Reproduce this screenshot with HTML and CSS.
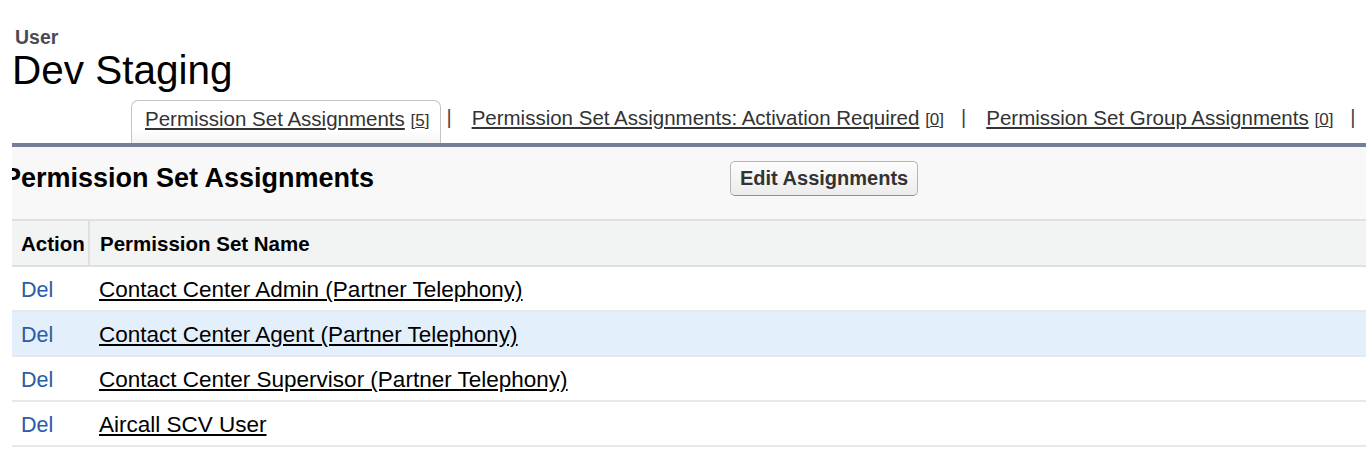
FILE: index.html
```html
<!DOCTYPE html>
<html>
<head>
<meta charset="utf-8">
<link rel="stylesheet" href="styles.css">
</head>
<body>
<div class="page">
  <div class="crumb">User</div>
  <h1 class="title">Dev Staging</h1>
  <div class="tabs">
    <span class="tab active"><a href="#">Permission Set Assignments</a> <span class="count">[<u>5</u>]</span></span>
    <span class="sep">|</span>
    <span class="tab"><a href="#">Permission Set Assignments: Activation Required</a> <span class="count">[<u>0</u>]</span></span>
    <span class="sep">|</span>
    <span class="tab"><a href="#">Permission Set Group Assignments</a> <span class="count">[<u>0</u>]</span></span>
    <span class="sep">|</span>
  </div>
  <div class="block">
    <div class="block-head">
      <h2 class="block-title">Permission Set Assignments</h2>
      <button class="btn">Edit Assignments</button>
    </div>
    <table class="list">
      <thead>
        <tr><th class="col-action">Action</th><th class="col-name">Permission Set Name</th></tr>
      </thead>
      <tbody>
        <tr><td class="col-action"><a class="del" href="#">Del</a></td><td class="col-name"><a href="#">Contact Center Admin (Partner Telephony)</a></td></tr>
        <tr class="hl"><td class="col-action"><a class="del" href="#">Del</a></td><td class="col-name"><a href="#">Contact Center Agent (Partner Telephony)</a></td></tr>
        <tr><td class="col-action"><a class="del" href="#">Del</a></td><td class="col-name"><a href="#">Contact Center Supervisor (Partner Telephony)</a></td></tr>
        <tr><td class="col-action"><a class="del" href="#">Del</a></td><td class="col-name"><a href="#">Aircall SCV User</a></td></tr>
      </tbody>
    </table>
  </div>
</div>
</body>
</html>
```
FILE: styles.css
```css
html, body { margin: 0; padding: 0; background: #fff; }
body { font-family: "Liberation Sans", Arial, sans-serif; color: #000; }
.page { padding: 26px 0 0 12px; }
.crumb { font-size: 19.5px; font-weight: bold; color: #4a4a56; line-height: 22px; padding-left: 3px; }
.title { margin: 0; font-size: 40.5px; font-weight: normal; line-height: 44px; color: #000; }
.tabs { display: flex; align-items: flex-start; margin-left: 119px; margin-top: 8px; height: 43px; }
.tab { display: block; padding: 0 12px; line-height: 36px; font-size: 20.5px; color: #333; white-space: nowrap; }
.tab a { color: #333; text-decoration: underline; }
.tab .count { font-size: 17px; color: #333; }
.tab.active { border: 1px solid #c4c4c4; border-bottom: none; border-radius: 7px 7px 0 0; padding: 0 11px 0 13px; height: 42px; background: linear-gradient(#fff 0%, #fff 70%, #f3f3f3 100%); }
.sep { display: block; font-size: 20px; line-height: 34px; color: #444; margin: 0 8px 0 5px; }
.block { border-top: 4px solid #747e96; background: #f8f8f8; overflow: hidden; }
.block-head { display: flex; align-items: flex-start; height: 72px; }
.block-title { margin: 16px 0 0 -9px; flex: 0 0 727px; font-size: 27px; line-height: 30px; font-weight: bold; color: #000; white-space: nowrap; }
.btn { font-family: inherit; font-size: 20px; font-weight: bold; color: #333; height: 35px; padding: 0 9px; border: 1px solid #b5b5b5; border-bottom-color: #8f8f8f; border-radius: 5px; background: linear-gradient(#fdfdfd, #ececec); margin-top: 14px; }
.list { width: 100%; border-collapse: collapse; background: #fff; }
.list th { background: #f2f3f3; font-size: 20.5px; font-weight: bold; text-align: left; height: 46px; padding: 2px 0 0 0; box-sizing: border-box; border-top: 2px solid #e0e0e0; border-bottom: 2px solid #e0e0e0; vertical-align: middle; }
.list th.col-action { width: 77px; padding-left: 9px; border-right: 2px solid #e0e0e0; }
.list th.col-name { padding-left: 10px; }
.list td { height: 45px; padding: 3px 0 0 0; box-sizing: border-box; font-size: 22.5px; border-bottom: 2px solid #e8e8e8; vertical-align: middle; }
.list td.col-action { padding-left: 9px; }
.list td.col-name { padding-left: 10px; }
.list td a { color: #000; text-decoration: underline; }
.list td a.del { color: #2b5ca6; text-decoration: none; font-size: 21.5px; }
.list tr.hl td { background: #e3f0fc; }
```
